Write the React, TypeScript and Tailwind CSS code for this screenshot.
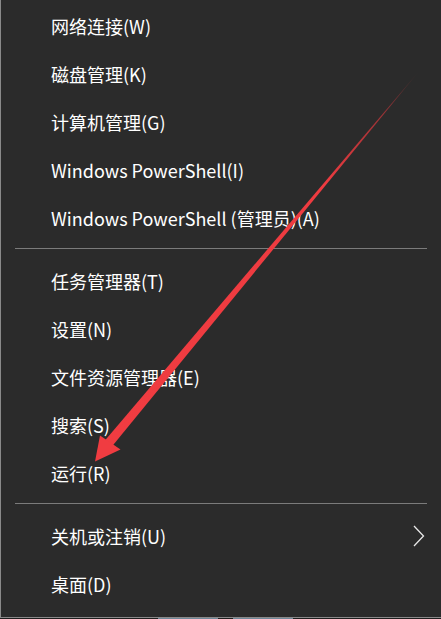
const groups: string[][] = [
  [
    "网络连接(W)",
    "磁盘管理(K)",
    "计算机管理(G)",
    "Windows PowerShell(I)",
    "Windows PowerShell (管理员)(A)",
  ],
  ["任务管理器(T)", "设置(N)", "文件资源管理器(E)", "搜索(S)", "运行(R)"],
  ["关机或注销(U)", "桌面(D)"],
];

function MenuItem({ label, submenu }: { label: string; submenu?: boolean }) {
  return (
    <div className="h-12 flex items-center justify-between pl-[50px] pr-[16px] text-[18px] text-white">
      <span>{label}</span>
      {submenu && (
        <svg width="12" height="22" viewBox="0 0 12 22" fill="none">
          <polyline
            points="1,1 10.5,11 1,21"
            stroke="#e8e8e8"
            strokeWidth="1.3"
          />
        </svg>
      )}
    </div>
  );
}

function Arrow() {
  return (
    <svg
      className="absolute inset-0 pointer-events-none"
      width="441"
      height="619"
      viewBox="0 0 441 619"
    >
      <defs>
        <linearGradient id="shaft" x1="420" y1="70" x2="108" y2="445" gradientUnits="userSpaceOnUse">
          <stop offset="0" stopColor="#e8383d" stopOpacity="0" />
          <stop offset="0.12" stopColor="#e8383d" stopOpacity="0.6" />
          <stop offset="0.3" stopColor="#ee3b40" />
          <stop offset="1" stopColor="#f03c41" />
        </linearGradient>
      </defs>
      {/* tapered shaft */}
      <polygon points="420,70 111.5,447 104.5,441" fill="url(#shaft)" />
      {/* head */}
      <polygon points="95,461.5 100,435.5 120.5,449.5" fill="#f03c41" />
    </svg>
  );
}

export default function App() {
  return (
    <div
      className="relative w-[441px] h-[619px] bg-[#1e1e1e] overflow-hidden"
      style={{ fontFamily: '"Noto Sans CJK SC", "Noto Sans", sans-serif' }}
    >
      <div className="h-[618px] bg-[#2b2b2b] border-l border-b border-[#8a8a8a] pt-[2px] flex flex-col">
        {groups.map((group, gi) => (
          <div key={gi}>
            {gi > 0 && (
              <div className="mx-[14px] pt-[6px] pb-[8px]">
                <div className="h-px bg-[#7b7b7b]" />
              </div>
            )}
            {group.map((label) => (
              <MenuItem key={label} label={label} submenu={label.startsWith("关机")} />
            ))}
          </div>
        ))}
      </div>
      <div className="flex h-px">
        <div className="w-[158px]" />
        <div className="w-[60px] bg-[#70889a]" />
        <div className="w-[15px]" />
        <div className="w-[60px] bg-[#70889a]" />
      </div>
      <Arrow />
    </div>
  );
}
